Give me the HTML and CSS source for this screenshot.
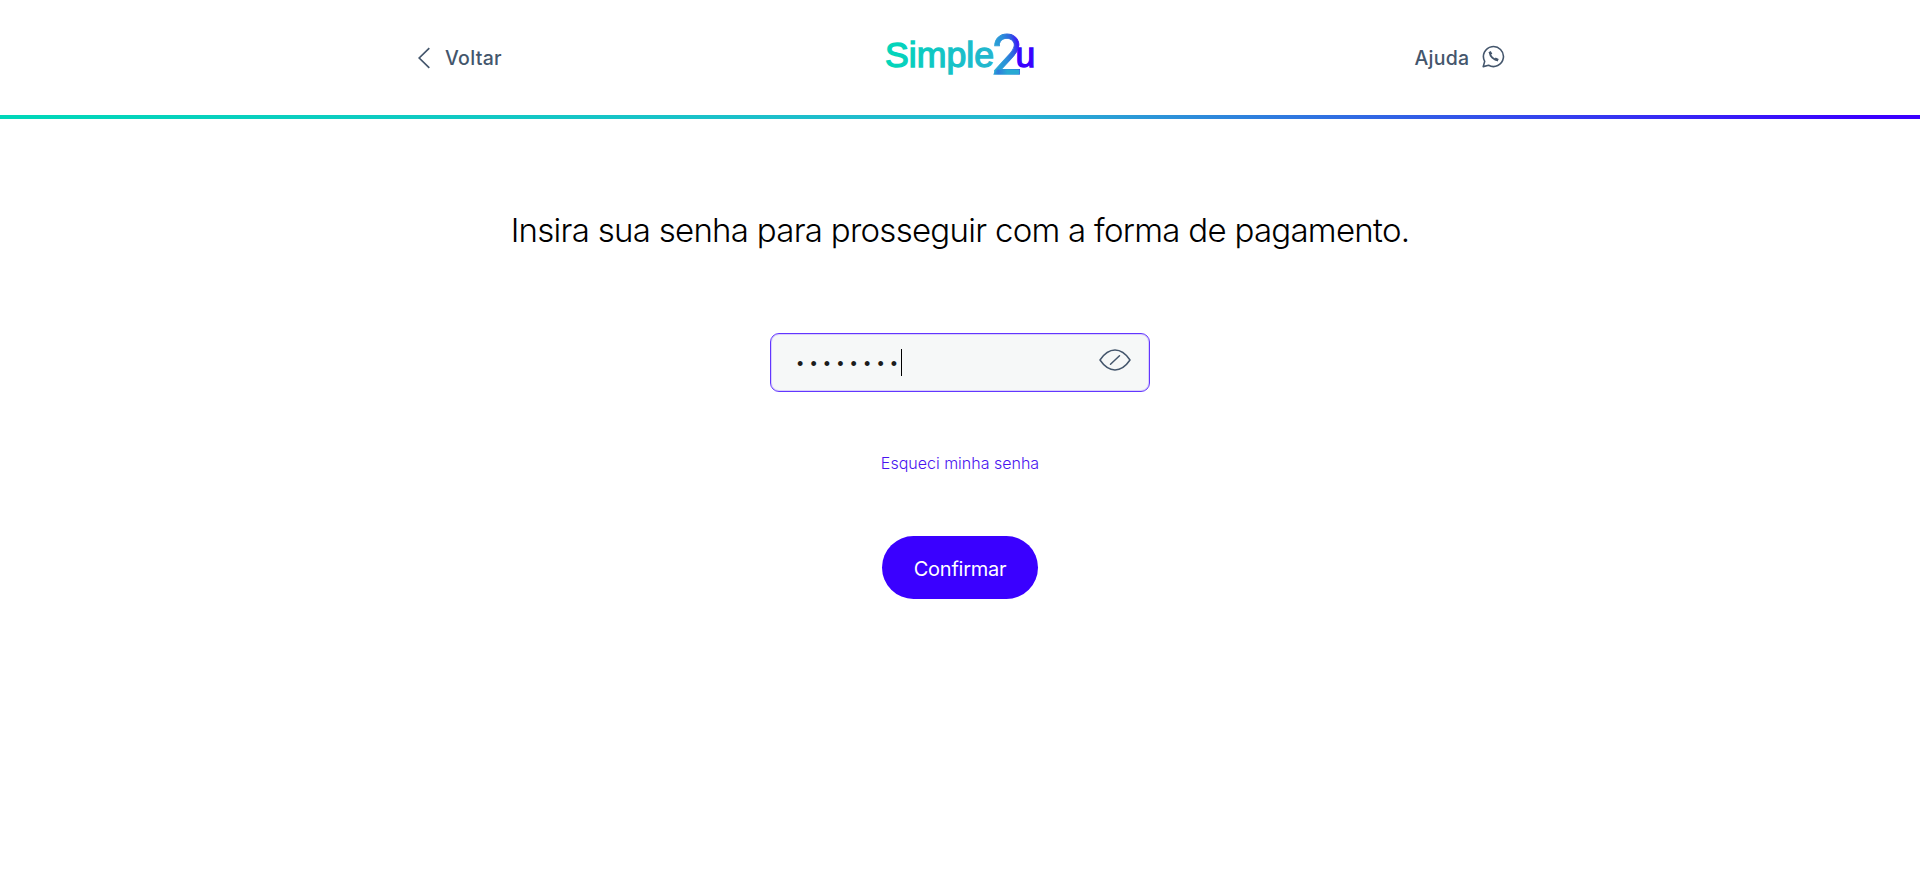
FILE: index.html
```html
<!DOCTYPE html>
<html lang="pt-BR">
<head>
<meta charset="utf-8">
<title>Simple2u</title>
<link rel="stylesheet" href="styles.css">
</head>
<body>
<header class="header">
  <div class="header-inner">
    <a class="nav-link back">
      <svg width="12" height="22" viewBox="0 0 12 22"><path d="M11.3 1.2 1.2 11l10.1 9.8" fill="none" stroke="#44566c" stroke-width="1.7"/></svg>
      <span class="back-label">Voltar</span>
    </a>
    <svg class="logo" width="152" height="50" viewBox="0 0 152 50">
      <defs>
        <linearGradient id="word" gradientUnits="userSpaceOnUse" x1="0" y1="0" x2="112" y2="0"><stop offset="0" stop-color="#00d7b9"/><stop offset="1" stop-color="#24b4d0"/></linearGradient>
        <linearGradient id="two" gradientUnits="userSpaceOnUse" x1="108" y1="28" x2="135" y2="23"><stop offset="0" stop-color="#28a9d3"/><stop offset=".45" stop-color="#2b8fd9"/><stop offset=".75" stop-color="#2e62df"/><stop offset="1" stop-color="#3a10fa"/></linearGradient>
        <linearGradient id="base" gradientUnits="userSpaceOnUse" x1="108" y1="0" x2="134" y2="0"><stop offset="0" stop-color="#28a9d3"/><stop offset=".2" stop-color="#2e7bdc"/><stop offset=".55" stop-color="#28a9d3"/></linearGradient>
      </defs>
      <text class="logo-word" x="0" y="39" textLength="109" lengthAdjust="spacingAndGlyphs" fill="url(#word)" stroke="url(#word)">Simple</text>
      <text class="logo-u" x="130.500" y="39" fill="#3a00ff" stroke="#3a00ff">u</text>
      <text class="logo-two" x="105.500" y="46" textLength="33" lengthAdjust="spacingAndGlyphs" fill="url(#two)" stroke="url(#two)">2</text>
      <path d="M112 41.500H134.500V46.500H108Z" fill="url(#base)"/>
    </svg>
    <a class="nav-link help">
      <span class="help-label">Ajuda</span>
      <svg class="help-icon" width="23" height="23" viewBox="0 0 23 23" fill="none" stroke="#44566c"><path d="M2.700 16.400A10 10 0 1 1 6.600 20.300L1.200 21.600Z" stroke-width="1.600" stroke-linejoin="round"/><path d="M7.800 7.200C8 11.500 11.500 15 15.600 15" stroke-width="1.800"/><path d="M7.600 6.600 9.200 9.400M13 13.800 16.200 15.200" stroke-width="2.600"/></svg>
    </a>
  </div>
</header>
<main class="main">
  <h1 class="title">Insira sua senha para prosseguir com a forma de pagamento.</h1>
  <div class="field">
    <span class="dots">••••••••</span><span class="caret"></span>
    <svg class="eye" width="32" height="22" viewBox="0 0 32 22" fill="none" stroke="#44566c" stroke-width="1.500" stroke-linecap="round" stroke-linejoin="round"><path d="M1 11C10-2.200 22-2.200 31 11C22 24.200 10 24.200 1 11ZM11.500 15.300 20.500 6.700"/></svg>
  </div>
  <a class="forgot">Esqueci minha senha</a>
  <button class="confirm">Confirmar</button>
</main>
</body>
</html>
```
FILE: styles.css
```css
* { box-sizing: border-box; }
body { margin: 0; background: #fff; font-family: Inter, "Open Sans", sans-serif; }
.header { height: 119px; border-bottom: 4px solid; border-image: linear-gradient(90deg, #00d7b9 2%, #25b8d0 52%, #2d8dda 62%, #3a00ff 97%) 1; }
.header-inner { width: 1088px; height: 115px; margin: 0 auto; display: grid; grid-template-columns: 1fr 152px 1fr; align-items: start; }
.nav-link { display: flex; align-items: center; height: 24px; margin-top: 46px; color: #44566c; font-size: 19.500px; font-weight: 500; line-height: 24px; letter-spacing: .3px; }
.back { padding-left: 2px; gap: 15px; }
.help { justify-content: flex-end; gap: 12.500px; margin-right: -1px; }
.help-icon { margin-bottom: 3px; }
.logo { margin-top: 28px; margin-left: 1px; overflow: visible; }
.logo-word, .logo-u { font-family: "Liberation Sans", Arial, sans-serif; font-size: 35.500px; font-weight: 400; stroke-width: 1.300px; }
.logo-two { font-size: 55px; font-weight: 400; stroke-width: .800px; }
.main { display: flex; flex-direction: column; align-items: center; }
.title { margin: 91px 0 0; font-size: 33px; line-height: 40px; font-weight: 300; color: #000; white-space: nowrap; letter-spacing: -.720px; }
.field { display: flex; align-items: flex-start; width: 380px; height: 59px; margin-top: 83px; padding: 0 18.500px 0 26px; border: 1px solid #6236ff; border-radius: 9px; background: #f6f8f8; box-shadow: inset 0 0 0 1px #d9cffa; }
.dots { margin-top: 15px; font-family: "Liberation Sans", sans-serif; font-size: 18px; line-height: 31px; letter-spacing: 7.100px; color: #1c1c1c; }
.caret { width: 1px; height: 27px; margin: 15px 0 0 -3px; background: #000; }
.eye { margin: 15px 0 0 auto; }
.forgot { margin-top: 60px; font-size: 16px; line-height: 22px; font-weight: 300; color: #4a14f0; white-space: nowrap; }
.confirm { width: 156px; height: 63px; margin-top: 62px; padding: 2px 0 0; border: 0; border-radius: 32px; background: #3a00ff; color: #fff; font: 400 20px Inter, sans-serif; letter-spacing: -.250px; }
```
